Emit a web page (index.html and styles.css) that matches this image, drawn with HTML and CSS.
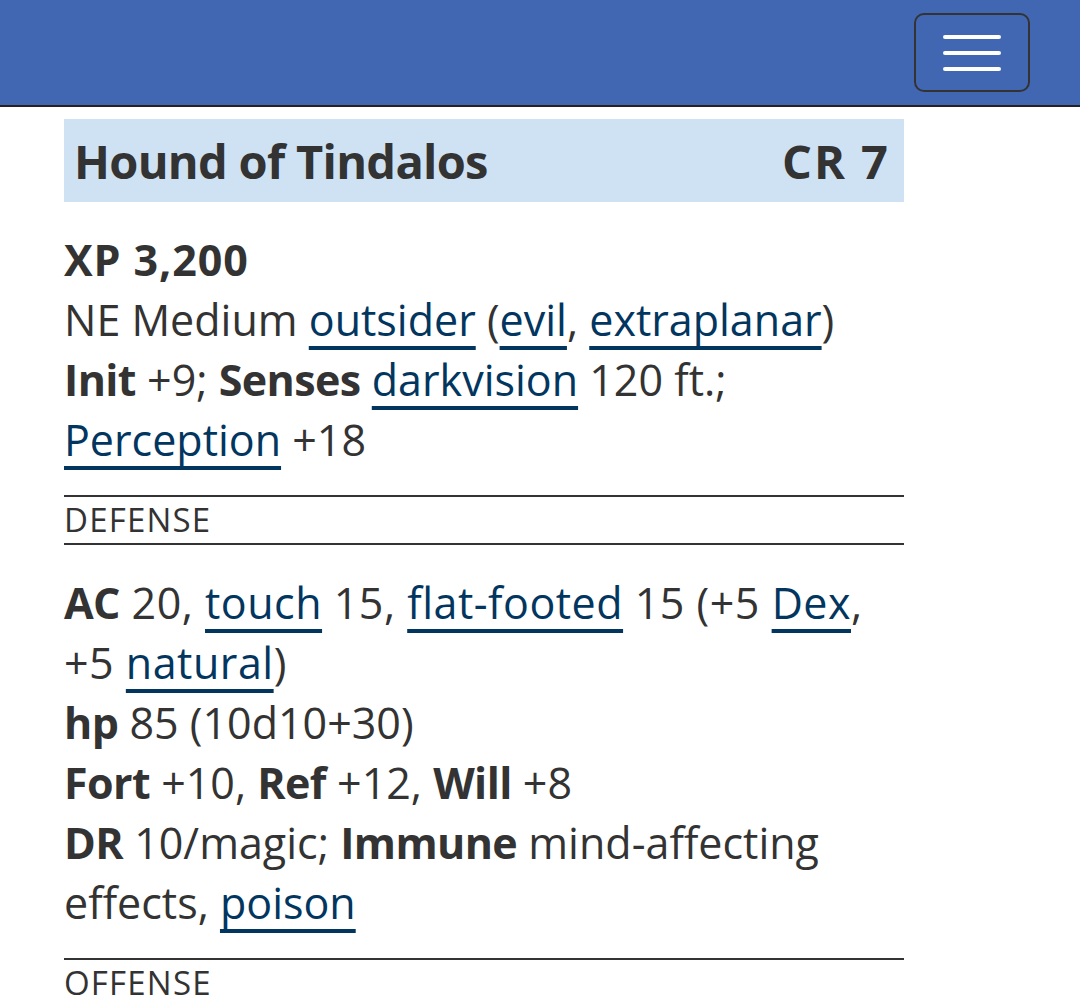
FILE: index.html
```html
<!DOCTYPE html>
<html lang="en">
<head>
<meta charset="utf-8">
<title>Hound of Tindalos</title>
<link rel="stylesheet" href="styles.css">
</head>
<body>
<header class="topbar">
  <button class="menu-btn" aria-label="Menu">
    <span class="bar"></span><span class="bar"></span><span class="bar"></span>
  </button>
</header>
<main class="page">
  <h1 class="title"><span>Hound of Tindalos</span><span class="cr">CR 7</span></h1>
  <div class="block first">
    <p class="line"><b class="xp">XP 3,200</b></p>
    <p class="line">NE Medium <a href="#">outsider</a> (<a href="#">evil</a>, <a href="#">extraplanar</a>)</p>
    <p class="line"><b>Init</b> +9; <b>Senses</b> <a href="#">darkvision</a> 120 ft.; <a href="#">Perception</a> +18</p>
  </div>
  <h2 class="section">DEFENSE</h2>
  <div class="block">
    <p class="line narrow"><b>AC</b> 20, <a href="#">touch</a> 15, <a href="#">flat-footed</a> 15 (+5 <a href="#">Dex</a>, +5 <a href="#">natural</a>)</p>
    <p class="line"><b>hp</b> 85 (10d10+30)</p>
    <p class="line"><b>Fort</b> +10, <b>Ref</b> +12, <b>Will</b> +8</p>
    <p class="line"><b>DR</b> 10/magic; <b>Immune</b> mind-affecting effects, <a href="#">poison</a></p>
  </div>
  <h2 class="section">OFFENSE</h2>
</main>
</body>
</html>
```
FILE: styles.css
```css
html, body {
  margin: 0;
  padding: 0;
  background: #fff;
}
body {
  font-family: "Open Sans", "Noto Sans", sans-serif;
  color: #333;
}
.topbar {
  height: 107px;
  background: #4267b2;
  border-bottom: 2px solid #222;
  display: flex;
  justify-content: flex-end;
  align-items: flex-start;
  padding: 13px 50px 0 0;
  box-sizing: border-box;
}
.menu-btn {
  width: 116px;
  height: 79px;
  border: 2px solid #333;
  border-radius: 10px;
  background: transparent;
  display: flex;
  flex-direction: column;
  align-items: center;
  justify-content: center;
  gap: 12px;
  padding: 0;
}
.bar {
  display: block;
  width: 58px;
  height: 4px;
  border-radius: 2px;
  background: #fff;
}
.page {
  width: 840px;
  margin: 12px 0 0 64px;
}
.title {
  margin: 0;
  height: 83px;
  background: #cfe2f3;
  display: flex;
  align-items: center;
  justify-content: space-between;
  padding: 0 16px 0 10px;
  font-size: 47px;
  font-weight: 700;
  letter-spacing: -0.7px;
  color: #333;
}
.cr {
  letter-spacing: 2px;
  margin-right: -2px;
}
.block {
  padding: 28px 0 25px;
}
.line {
  margin: 0;
  font-size: 43px;
  line-height: 60px;
  letter-spacing: 0;
}
.line b {
  font-weight: 700;
  letter-spacing: -0.6px;
}
.line b.xp {
  letter-spacing: 0.9px;
}
.line.narrow {
  letter-spacing: 0.5px;
}
.line.narrow b {
  letter-spacing: -0.6px;
}
a {
  color: #02365f;
  text-decoration: underline;
  text-decoration-thickness: 4px;
  text-underline-offset: 10px;
  text-decoration-skip-ink: none;
}
.section {
  margin: 0;
  border-top: 2px solid #333;
  border-bottom: 2px solid #333;
  font-size: 33px;
  font-weight: 400;
  letter-spacing: 1.2px;
  line-height: 46px;
  height: 46px;
}
```
